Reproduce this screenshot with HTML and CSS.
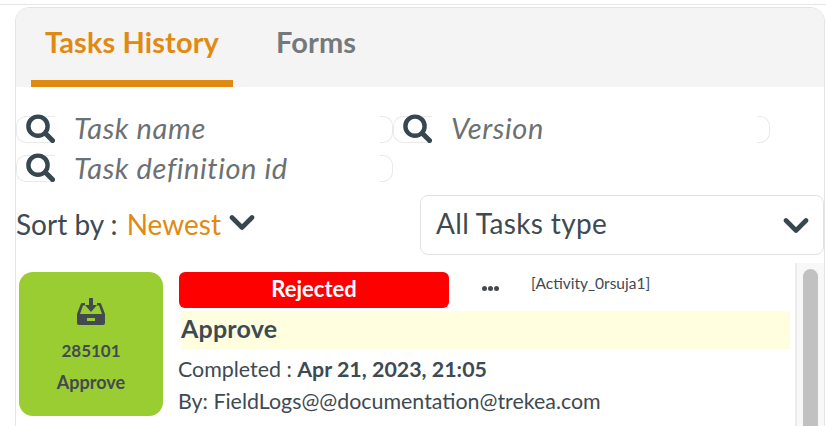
FILE: index.html
```html
<!DOCTYPE html>
<html lang="en">
<head>
  <meta charset="UTF-8">
  <title>Tasks History</title>
  <link rel="stylesheet" href="styles.css">
</head>
<body>
  <div class="card">
    <div class="tabs">
      <a class="tab active">Tasks History</a>
      <a class="tab">Forms</a>
    </div>

    <div class="filters">
      <label class="search">
        <span class="search-icon"><svg viewBox="0 0 29 29"><use href="#icon-search"/></svg></span>
        <input type="text" placeholder="Task name">
      </label>
      <label class="search">
        <span class="search-icon"><svg viewBox="0 0 29 29"><use href="#icon-search"/></svg></span>
        <input type="text" placeholder="Version">
      </label>
      <label class="search">
        <span class="search-icon"><svg viewBox="0 0 29 29"><use href="#icon-search"/></svg></span>
        <input type="text" placeholder="Task definition id">
      </label>
    </div>

    <div class="sort-row">
      <div class="sort">
        <span>Sort by :</span>
        <span class="sort-value">Newest</span>
        <svg class="chevron" viewBox="0 0 26 17"><use href="#icon-chevron"/></svg>
      </div>
      <div class="type-select">
        <span>All Tasks type</span>
        <svg class="chevron" viewBox="0 0 26 17"><use href="#icon-chevron"/></svg>
      </div>
    </div>

    <div class="list">
      <div class="list-items">
        <div class="task">
          <div class="task-tile">
            <svg class="tile-icon" viewBox="0 0 28 27">
              <path fill-rule="evenodd" d="M8 5H5.5a2 2 0 0 0-1.9 1.4L0 16v9a2 2 0 0 0 2 2h24a2 2 0 0 0 2-2v-9L24.4 6.4A2 2 0 0 0 22.5 5H20v2.5h2L25 16H3l3-8.5h2zM10 20h8v3h-8z"/>
              <path d="M12 0h4v7h4l-6 7-6-7h4z"/>
            </svg>
            <div class="tile-id">285101</div>
            <div class="tile-name">Approve</div>
          </div>
          <div class="task-body">
            <div class="task-top">
              <div class="status">Rejected</div>
              <div class="dots"><i></i><i></i><i></i></div>
              <div class="activity">[Activity_0rsuja1]</div>
            </div>
            <div class="task-title">Approve</div>
            <div class="task-line first">Completed : <b>Apr 21, 2023, 21:05</b></div>
            <div class="task-line">By: FieldLogs@@documentation@trekea.com</div>
          </div>
        </div>
      </div>
      <div class="scroll-rail"><div class="scroll-thumb"></div></div>
    </div>
  </div>

  <svg class="defs" width="0" height="0">
    <symbol id="icon-search" viewBox="0 0 29 29">
      <path fill="none" stroke="currentColor" stroke-width="4.4" d="M12 2.6a9.6 9.6 0 1 0 0 19.2a9.6 9.6 0 1 0 0-19.2z"/>
      <path fill="none" stroke="currentColor" stroke-width="5" stroke-linecap="round" d="M19.5 19.5l7 7"/>
    </symbol>
    <symbol id="icon-chevron" viewBox="0 0 26 17">
      <path fill="none" stroke="currentColor" stroke-width="4.6" stroke-linecap="round" stroke-linejoin="round" d="M3 3.5l10 10 10-10"/>
    </symbol>
  </svg>
</body>
</html>
```

FILE: styles.css
```css
body {
  margin: 0;
  padding: 7px 1px 0 15px;
  box-sizing: border-box;
  height: 426px;
  overflow: hidden;
  font-family: "Lato", "Open Sans", sans-serif;
  color: #3e4a52;
  background: white;
  position: relative;
}

/* thin line above the card */
body::before {
  content: "";
  position: absolute;
  left: 0;
  right: 0;
  top: 4px;
  height: 1px;
  background: #e6e6e6;
}

.defs {
  position: absolute;
}

.card {
  border: 1px solid #e4e4e4;
  border-radius: 14px;
  height: 500px;
  overflow: hidden;
}

.tabs {
  display: flex;
  background: #f4f4f4;
  height: 79px;
  padding-left: 15px;
}

.tab {
  font-size: 29px;
  font-weight: 700;
  letter-spacing: 0.1px;
  color: #75797c;
  padding: 16px 14px 0;
  margin-right: 29px;
  box-sizing: border-box;
  height: 79px;
}

.tab.active {
  color: #e08a12;
  border-bottom: 7px solid #e08a12;
  width: 202px;
}

.filters {
  display: flex;
  flex-wrap: wrap;
  row-gap: 12px;
  padding-top: 29px;
}

.search {
  display: flex;
  align-items: center;
  width: 377px;
  height: 27px;
}

.search::after {
  content: "";
  width: 12px;
  height: 25px;
  margin-left: auto;
  border: 1px solid #e9e9e9;
  border-left: 0;
  border-radius: 0 10px 10px 0;
}

.search-icon {
  display: block;
  width: 38px;
  height: 25px;
  border: 1px solid #e9e9e9;
  border-right: 0;
  border-radius: 10px 0 0 10px;
  color: #37474f;
  position: relative;
}

.search-icon svg {
  position: absolute;
  left: 9px;
  top: -3px;
  width: 29px;
  height: 29px;
}

.search input {
  flex: 1;
  min-width: 0;
  border: 0;
  outline: 0;
  padding: 0 0 4px 19px;
  background: transparent;
  font: italic 29px "Lato", sans-serif;
  letter-spacing: 0.6px;
}

.search:nth-child(3) input {
  padding-bottom: 2px;
}

.search input::placeholder {
  color: #6c7073;
  opacity: 1;
}

.sort-row {
  display: flex;
  justify-content: space-between;
  align-items: flex-start;
  padding: 13px 0 0;
  height: 60px;
}

.sort {
  font-size: 28px;
  padding-top: 12px;
  display: flex;
  align-items: center;
  gap: 9px;
}

.sort .chevron {
  margin-left: -1px;
  margin-top: -3px;
}

.sort-value {
  color: #e08a12;
}

.chevron {
  width: 26px;
  height: 17px;
  color: #37474f;
}

.type-select {
  width: 404px;
  height: 60px;
  box-sizing: border-box;
  border: 1px solid #e2e2e2;
  border-radius: 8px;
  padding: 0 14px 5px 15px;
  display: flex;
  justify-content: space-between;
  align-items: center;
  font-size: 28px;
  letter-spacing: 0.35px;
}

.type-select .chevron {
  margin-top: 5px;
}

.list {
  display: flex;
  margin-top: 8px;
  height: 300px;
}

.list-items {
  flex: 1;
  padding: 9px 5px 0 3px;
}

.task {
  display: flex;
  gap: 16px;
}

.task-tile {
  width: 144px;
  height: 144px;
  flex: none;
  background: #9acd32;
  border-radius: 14px;
  display: flex;
  flex-direction: column;
  align-items: center;
  font-size: 18px;
  font-weight: 700;
  color: #434a4f;
}

.tile-icon {
  width: 28px;
  height: 27px;
  margin-top: 26px;
  fill: #434a4f;
}

.tile-id {
  margin-top: 15px;
  font-size: 17px;
}

.tile-name {
  margin-top: 10px;
}

.task-body {
  flex: 1;
  min-width: 0;
}

.task-top {
  display: flex;
  align-items: flex-start;
}

.status {
  width: 270px;
  height: 36px;
  line-height: 34px;
  background: #f00;
  border-radius: 6px;
  color: white;
  text-align: center;
  font-size: 22px;
  font-weight: 700;
}

.dots {
  display: flex;
  gap: 1px;
  margin: 14px 0 0 33px;
}

.dots i {
  width: 5px;
  height: 5px;
  border-radius: 50%;
  background: #434a4f;
}

.activity {
  font-size: 15.5px;
  margin-left: 32px;
  margin-top: 2px;
}

.task-title {
  margin: 3px 0 0 2px;
  height: 38px;
  line-height: 34px;
  background: #ffffe0;
  font-size: 25px;
  font-weight: 700;
  letter-spacing: 0.2px;
}

.task-line {
  font-size: 21.4px;
  line-height: 32px;
  margin-left: -1px;
}

.task-line.first {
  margin-top: 4px;
}

.scroll-rail {
  width: 29px;
  box-sizing: border-box;
  flex: none;
  background: #f8f8f8;
  border-left: 2px solid #ececec;
  padding: 6px 6px 0 6px;
}

.scroll-thumb {
  height: 280px;
  background: #c1c1c1;
  border-radius: 8px;
}
```
